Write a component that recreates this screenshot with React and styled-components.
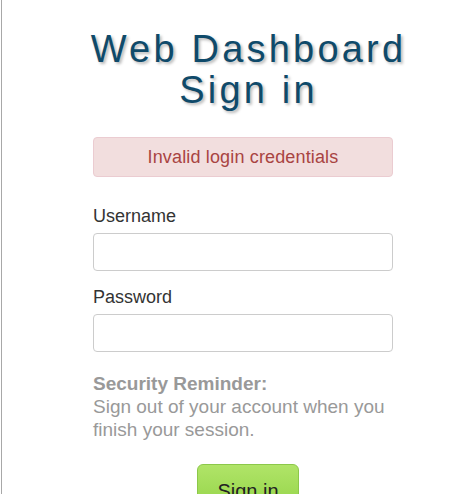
import React from "react";
import styled, { createGlobalStyle } from "styled-components";

const Global = createGlobalStyle`
  html, body { margin: 0; padding: 0; background: #fff; }
  body { font-family: "Liberation Sans", Arial, sans-serif; }
`;

const Page = styled.div`
  margin-left: 1px;
  border-left: 1px solid #a8a8a8;
  min-height: 100vh;
  box-sizing: border-box;
`;

const Column = styled.div`
  width: 300px;
  margin-left: 91px;
  padding-top: 29px;
  display: flex;
  flex-direction: column;
`;

const Title = styled.h1`
  margin: 0 -30px;
  padding-left: 11px;
  white-space: nowrap;
  font-family: "Liberation Sans", Arial, sans-serif;
  font-weight: normal;
  font-size: 38px;
  line-height: 41px;
  letter-spacing: 3.2px;
  text-align: center;
  color: #0f4a6a;
  text-shadow: 2px 2px 3px rgba(0, 0, 0, 0.28);
`;

const Alert = styled.div`
  margin-top: 26px;
  height: 40px;
  box-sizing: border-box;
  display: flex;
  align-items: center;
  justify-content: center;
  background: #f2dede;
  border: 1px solid #ebccd1;
  border-radius: 4px;
  color: #a94442;
  font-size: 18px;
  letter-spacing: 0.15px;
`;

const Form = styled.form`
  margin-top: 29px;
  display: flex;
  flex-direction: column;
`;

const Label = styled.label`
  font-size: 18px;
  line-height: 20px;
  color: #333;
  margin-top: ${(p) => (p.$first ? "0" : "16px")};
`;

const Input = styled.input`
  margin-top: 7px;
  height: 38px;
  box-sizing: border-box;
  border: 1px solid #ccc;
  border-radius: 4px;
  padding: 6px 10px;
  font-size: 16px;
  font-family: inherit;
  background: #fff;
  outline: none;
`;

const Reminder = styled.p`
  margin: 20px 0 0;
  font-size: 19px;
  line-height: 23px;
  color: #999;
`;

const Strong = styled.strong`
  display: block;
  font-weight: bold;
`;

const ButtonRow = styled.div`
  margin-top: 23px;
  display: flex;
  justify-content: center;
  padding-left: 10px;
`;

const Button = styled.button`
  width: 102px;
  height: 44px;
  box-sizing: border-box;
  padding: 0;
  border: 1px solid #8cc84a;
  border-radius: 6px;
  background: linear-gradient(to bottom, #b0e468 0%, #96d54a 100%);
  color: #222;
  font-family: inherit;
  font-size: 20px;
  line-height: 44px;
  padding-top: 4px;
`;

export default function App() {
  return (
    <>
      <Global />
      <Page>
        <Column>
          <Title>
            Web Dashboard
            <br />
            Sign in
          </Title>
          <Alert>Invalid login credentials</Alert>
          <Form onSubmit={(e) => e.preventDefault()}>
            <Label $first htmlFor="username">Username</Label>
            <Input id="username" type="text" />
            <Label htmlFor="password">Password</Label>
            <Input id="password" type="password" />
            <Reminder>
              <Strong>Security Reminder:</Strong>
              Sign out of your account when you finish your session.
            </Reminder>
            <ButtonRow>
              <Button type="submit">Sign in</Button>
            </ButtonRow>
          </Form>
        </Column>
      </Page>
    </>
  );
}
